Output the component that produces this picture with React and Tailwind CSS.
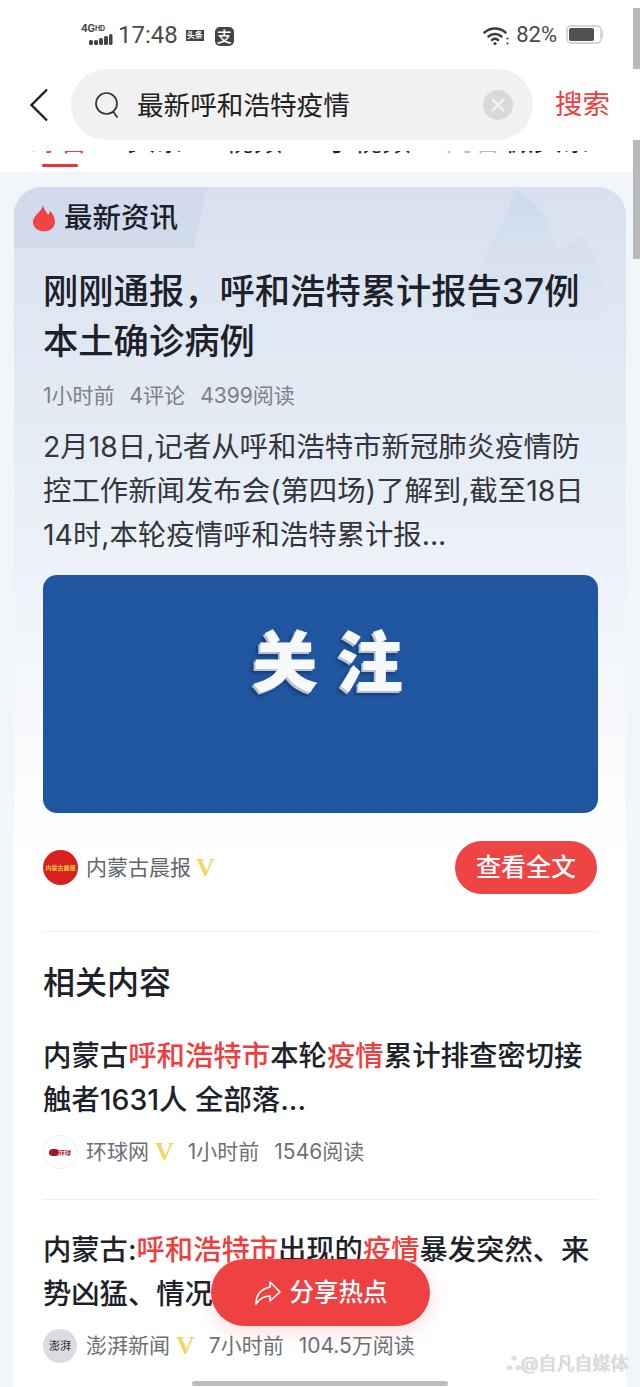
import React from "react";
import { X } from "lucide-react";

function Flame({ className }) {
  return (
    <svg viewBox="0 0 24 30" className={className}>
      <path
        d="M11 1c1 5 3.500 7 5.500 10.500 1.200-1.200 1.800-2.800 1.800-4.500C21.500 10 24 14.500 24 19c0 6-5.200 10.500-12 10.500S0 25 0 19.300C0 11.500 9 9 11 1z"
        fill="currentColor"
      />
    </svg>
  );
}

function VBadge({ className = "" }) {
  return (
    <span className={`font-['Liberation_Serif',serif] font-bold text-[#f2d668] text-[26px] leading-none ${className}`}>
      V
    </span>
  );
}

function Red({ children }) {
  return <span className="text-[#ee3f3f]">{children}</span>;
}

function MetaRow({ avatar, source, time, reads }) {
  return (
    <div className="flex items-center h-[36px] text-[21px] text-[#6d7076]">
      {avatar}
      <span className="ml-[9px]">{source}</span>
      <VBadge className="ml-[6px]" />
      <span className="ml-[14px]">{time}</span>
      <span className="ml-[15px]">{reads}</span>
    </div>
  );
}

export default function App() {
  return (
    <div className="relative w-[640px] h-[1387px] overflow-hidden bg-white font-['Inter','Noto_Sans_CJK_SC',sans-serif] text-[#1d2129]">
      {/* status bar */}
      <div className="h-[69px] pt-[19px] pl-[81px] pr-[37px] flex items-start text-[#4a4a4a]">
        <div className="flex flex-col w-[33px] pt-[5px]">
          <span className="text-[10px] leading-[9px] font-bold tracking-[-0.2px] text-[#444]">
            4G<span className="text-[7px] align-top">HD</span>
          </span>
          <svg viewBox="0 0 33 12" className="w-[33px] h-[12px]">
            <rect x="8" y="7" width="4" height="5" rx="1.500" fill="#444" />
            <rect x="13" y="7" width="4" height="5" rx="1.500" fill="#444" />
            <rect x="18" y="5" width="4" height="7" rx="1.500" fill="#444" />
            <rect x="23" y="3" width="4" height="9" rx="1.500" fill="#444" />
            <rect x="28" y="1" width="3.500" height="11" rx="1.500" fill="#444" />
          </svg>
        </div>
        <span className="ml-[4px] text-[24px] leading-[32px] font-['Roboto',sans-serif]">17:48</span>
        <span className="ml-[8px] mt-[11px] w-[18px] h-[11px] bg-[#444] text-white text-[8px] leading-[11px] text-center font-bold overflow-hidden">
          头条
        </span>
        <span className="ml-[11px] mt-[8px] w-[19px] h-[19px] rounded-[5px] bg-[#444] text-white text-[15px] leading-[19px] text-center font-medium">
          支
        </span>
        <svg viewBox="0 0 26 20" className="ml-auto mt-[7px] w-[26px] h-[20px]" fill="none" stroke="#3c3c3c" strokeWidth="2.500" strokeLinecap="round">
          <path d="M1.500 6.500c6-5.300 15-5.300 21 0" />
          <path d="M5.500 10.500c3.800-3.300 9.200-3.300 13 0" />
          <path d="M9 14c1.800-1.400 4.200-1.400 6 0" />
          <circle cx="12" cy="17.500" r="1.600" fill="#3c3c3c" stroke="none" />
          <circle cx="24.500" cy="12.500" r="1.100" fill="#3c3c3c" stroke="none" />
          <circle cx="24.500" cy="17.500" r="1.100" fill="#3c3c3c" stroke="none" />
        </svg>
        <span className="ml-[7px] text-[22px] leading-[32px] font-['Roboto',sans-serif]">82%</span>
        <div className="ml-[9px] mt-[6px] flex items-center">
          <div className="w-[36px] h-[19px] rounded-[5px] border-2 border-[#d6d6d6] p-px flex items-stretch">
            <div className="w-[25px] rounded-[2px] bg-[#505050]" />
          </div>
          <div className="w-px h-[7px] bg-[#d0d0d0]" />
        </div>
      </div>

      {/* search row */}
      <div className="h-[71px] flex items-center relative z-10 bg-white">
        <svg viewBox="0 0 20 34" className="ml-[29px] w-[20px] h-[34px]" fill="none" stroke="#222" strokeWidth="2.400">
          <path d="M18 1.500L2.500 17 18 32.500" />
        </svg>
        <div className="ml-[22px] w-[462px] h-[71px] rounded-full bg-[#f1f1f1] flex items-center">
          <svg viewBox="0 0 26 28" className="ml-[23px] w-[26px] h-[28px]" fill="none" stroke="#333" strokeWidth="1.700" strokeLinecap="round">
            <circle cx="12.500" cy="12.500" r="10.500" />
            <path d="M19.500 21l3.500 5" />
          </svg>
          <span className="ml-[17px] pt-[2px] text-[26.600px] leading-none text-[#222]">最新呼和浩特疫情</span>
          <span className="ml-auto mr-[20px] w-[30px] h-[30px] rounded-full bg-[#d9d9d9] flex items-center justify-center">
            <X className="w-[20px] h-[20px] text-[#f1f1f1]" strokeWidth={3} />
          </span>
        </div>
        <span className="ml-[22px] text-[27.500px] leading-none text-[#ee3f3f]">搜索</span>
      </div>

      {/* tab strip, scrolled almost fully under the search row */}
      <div className="h-[32px] pt-[11px] relative">
        <div className="h-[3px] overflow-hidden">
          <div className="flex -mt-[26px] pl-[31px] text-[28.500px] leading-[32px] whitespace-nowrap">
            <span className="w-[96px] text-[#ee3f3f]">综合</span>
            <span className="w-[98px]">头条</span>
            <span className="w-[100px]">视频</span>
            <span className="w-[120px]">小视频</span>
            <span className="w-[60px] opacity-30">问答</span>
            <span>微头条</span>
          </div>
        </div>
        <div className="absolute left-[42px] top-[24px] w-[36px] h-[3px] rounded-full bg-[#e5343c]" />
      </div>

      {/* feed */}
      <div className="bg-[#f2f5f9] h-[1215px] px-[14px] pt-[15px]">
        <div className="relative h-[1300px] rounded-[28px] bg-linear-to-b from-[#d7e1ef] to-white to-[52%] overflow-hidden">
          <div className="absolute left-0 top-0 w-[193px] h-[61px] bg-[#d1dbeb] [clip-path:polygon(0_0,100%_0,93%_100%,0_100%)]" />
          <svg viewBox="0 0 140 180" className="absolute left-[454px] top-0 w-[140px] h-[180px]">
            <defs>
              <linearGradient id="flameFade" x1="0" y1="0" x2="0" y2="1">
                <stop offset="0" stopColor="#c6d5ec" stopOpacity="0.55" />
                <stop offset="0.5" stopColor="#d2dded" stopOpacity="0.35" />
                <stop offset="1" stopColor="#e6ecf5" stopOpacity="0" />
              </linearGradient>
            </defs>
            <path
              d="M47 3C62 8 85 30 87 65C95 62 108 55 114 49C130 70 138 95 136 125C132 160 100 178 70 178C30 178 0 150 0 115C0 85 25 70 47 3Z"
              fill="url(#flameFade)"
            />
          </svg>

          <div className="relative px-[29px]">
            <div className="-ml-[10px] h-[62px] flex items-center">
              <Flame className="w-[22px] h-[28px] text-[#ef4444]" />
              <span className="ml-[9px] text-[28.500px] font-medium leading-none">最新资讯</span>
            </div>

            <h1 className="mt-[18px] text-[35.300px] leading-[50px] font-medium">
              刚刚通报，呼和浩特累计报告37例
              <br />
              本土确诊病例
            </h1>

            <div className="mt-[14px] flex gap-[15px] text-[21px] leading-[30px] text-[#7c8088]">
              <span>1小时前</span>
              <span>4评论</span>
              <span>4399阅读</span>
            </div>

            <p className="mt-[14px] text-[28.400px] leading-[44px] text-[#33363c] whitespace-nowrap">
              2月18日,记者从呼和浩特市新冠肺炎疫情防
              <br />
              控工作新闻发布会(第四场)了解到,截至18日
              <br />
              14时,本轮疫情呼和浩特累计报...
            </p>

            <div className="mt-[18px] h-[238px] w-[555px] rounded-[14px] bg-[#20559f] flex items-start justify-center pt-[54px]">
              <span className="text-[66px] leading-none font-black tracking-[19px] text-[#f7f8fa] pl-[33px] [text-shadow:-2px_2px_0_#b9c2d0,-4px_4px_3px_rgba(10,30,70,0.45)]">
                关注
              </span>
            </div>

            <div className="mt-[28px] h-[53px] flex items-center">
              <span className="w-[35px] h-[35px] rounded-full bg-[#d9201f] flex items-center justify-center overflow-hidden text-[#f5c842] text-[6px] font-bold whitespace-nowrap">
                内蒙古晨报
              </span>
              <span className="ml-[8px] text-[21px] text-[#62666d]">内蒙古晨报</span>
              <VBadge className="ml-[5px]" />
              <span className="ml-auto w-[142px] h-[53px] rounded-full bg-[#ef4444] text-white text-[25px] font-medium flex items-center justify-center">
                查看全文
              </span>
            </div>

            <div className="mt-[37px] h-px bg-[#eceef0]" />

            <h2 className="mt-[31px] text-[32px] leading-[40px] font-medium">相关内容</h2>

            <div className="mt-[31px] text-[28.400px] leading-[44px] font-medium whitespace-nowrap">
              内蒙古<Red>呼和浩特市</Red>本轮<Red>疫情</Red>累计排查密切接
              <br />
              触者1631人 全部落...
            </div>
            <div className="mt-[12px]">
              <MetaRow
                avatar={
                  <span className="w-[34px] h-[34px] rounded-full border border-[#eeeeee] bg-white flex items-center justify-center">
                    <span className="w-[10px] h-[7px] rounded-full bg-[#a3172d]" />
                    <span className="text-[6px] text-[#a3172d] font-bold whitespace-nowrap">环球</span>
                  </span>
                }
                source="环球网"
                time="1小时前"
                reads="1546阅读"
              />
            </div>

            <div className="mt-[29px] h-px bg-[#eceef0]" />

            <div className="mt-[28px] text-[28.300px] leading-[44px] font-medium whitespace-nowrap">
              内蒙古:<Red>呼和浩特市</Red>出现的<Red>疫情</Red>暴发突然、来
              <br />
              势凶猛、情况复杂
            </div>
            <div className="mt-[12px]">
              <MetaRow
                avatar={
                  <span className="w-[34px] h-[34px] rounded-full bg-[#dcdce0] flex items-center justify-center text-[11px] text-[#222] whitespace-nowrap font-['Liberation_Serif','Noto_Sans_CJK_SC',serif]">
                    澎湃
                  </span>
                }
                source="澎湃新闻"
                time="7小时前"
                reads="104.5万阅读"
              />
            </div>
          </div>
        </div>
      </div>

      {/* overlays */}
      <div className="absolute right-0 top-[8px] w-[7px] h-[251px] bg-[#b9b9b9]" />

      <button className="absolute left-[211px] top-[1259px] w-[219px] h-[67px] rounded-full bg-[#f04142] text-white flex items-center justify-center shadow-[0_6px_20px_rgba(240,65,66,0.18)]">
        <svg viewBox="0 0 28 26" className="w-[28px] h-[26px] mr-[8px]" fill="none" stroke="#fff" strokeWidth="1.600" strokeLinejoin="round">
          <path d="M16 2l10 10-10 9v-5c-6 0-10 2-14 8 0-9 5-15 14-17z" />
        </svg>
        <span className="text-[24.500px] font-medium leading-none">分享热点</span>
      </button>

      <span className="absolute left-[507px] top-[1352px] text-[18px] leading-[24px] text-[#e2e2e2] [text-shadow:0_0_1px_#9a9a9a]">
        ஃ@自凡自媒体
      </span>

      <div className="absolute left-[192px] top-[1381px] w-[256px] h-[5px] rounded-full bg-[#bdbdbd]" />
    </div>
  );
}
